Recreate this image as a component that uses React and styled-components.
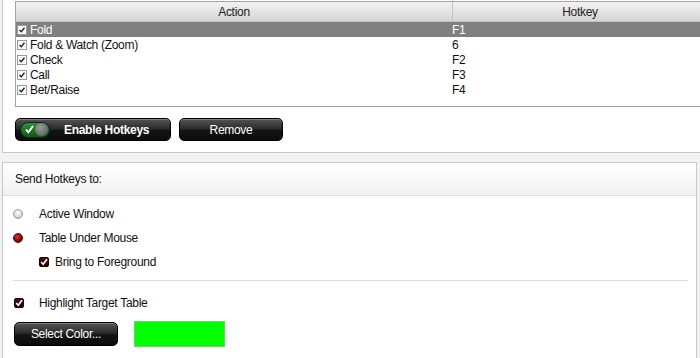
import React from "react"
import styled, { createGlobalStyle } from "styled-components"

const GlobalStyle = createGlobalStyle`
  html, body {
    margin: 0;
    background: #f3f3f3;
    font-family: "Liberation Sans", Arial, sans-serif;
    font-size: 12px;
    letter-spacing: -0.3px;
    color: #111;
  }
`

const Page = styled.div`
  width: 700px;
  height: 358px;
  overflow: hidden;
  display: flex;
  flex-direction: column;
`

const TopPanel = styled.section`
  margin-left: 2px;
  width: 693px;
  background: #fff;
  border: 1px solid #c8c8c8;
  border-top: none;
  padding: 1px 8px 11px 12px;
`

const Table = styled.div`
  height: 104px;
  border: 1px solid #a3a3a3;
  background: #fff;
  display: flex;
  flex-direction: column;
`

const HeaderRow = styled.div`
  display: grid;
  grid-template-columns: 436px 1fr;
  height: 19px;
  background: linear-gradient(#f2f2f2, #d6d6d6);
  border-bottom: 1px solid #c0c0c0;
`

const HeaderCell = styled.div`
  display: flex;
  align-items: center;
  justify-content: center;
  border-left: ${p => (p.$first ? "none" : "1px solid #c4c4c4")};
  color: #222;
`

const Row = styled.div`
  display: grid;
  grid-template-columns: 436px 1fr;
  height: 15px;
  align-items: center;
  background: ${p => (p.$selected ? "#808080" : "transparent")};
  color: ${p => (p.$selected ? "#fff" : "#111")};
`

const Cell = styled.div`
  display: flex;
  align-items: center;
  gap: 3px;
  padding-left: ${p => (p.$first ? "1px" : "0")};
  white-space: nowrap;
`

const TinyBox = styled.span`
  width: 8px;
  height: 8px;
  border: 1px solid #9a9a9a;
  background: #fafafa;
  display: inline-flex;
  align-items: center;
  justify-content: center;
`

const ButtonRow = styled.div`
  display: flex;
  gap: 8px;
  margin-top: 11px;
`

const DarkButton = styled.button`
  height: ${p => p.$h || 23}px;
  width: ${p => p.$w}px;
  border: 1px solid #000;
  border-radius: 5px;
  background: linear-gradient(#555 0%, #2c2c2c 45%, #141414 55%, #0c0c0c 100%);
  box-shadow: inset 0 1px 0 rgba(255, 255, 255, 0.25);
  color: #fff;
  font-family: "Liberation Sans", Arial, sans-serif;
  font-size: 12px;
  letter-spacing: -0.3px;
  font-weight: ${p => (p.$bold ? "bold" : "normal")};
  white-space: nowrap;
  display: flex;
  align-items: center;
  justify-content: ${p => (p.$lead ? "flex-start" : "center")};
  gap: 14px;
  padding: 0 4px;
  cursor: pointer;
`

const Toggle = styled.span`
  width: 30px;
  height: 16px;
  border-radius: 8px;
  background: linear-gradient(#2f8f3a, #0d5a17);
  border: 1px solid #0a2a0a;
  display: flex;
  align-items: center;
  justify-content: space-between;
  padding: 0 1px 0 4px;
  box-sizing: border-box;
`

const Knob = styled.span`
  width: 13px;
  height: 13px;
  border-radius: 50%;
  background: radial-gradient(circle at 40% 35%, #9a9a9a, #555);
`

const Gap = styled.div`
  height: 9px;
  background: #f3f3f3;
`

const LowerPanel = styled.section`
  margin-left: 2px;
  width: 693px;
  flex: 1;
  background: #fff;
  border: 1px solid #c8c8c8;
  border-bottom: none;
`

const LowerHeader = styled.div`
  height: 32px;
  display: flex;
  align-items: center;
  padding-left: 12px;
  background: linear-gradient(#ffffff, #f2f2f2);
  border-bottom: 1px solid #dedede;
`

const LowerBody = styled.div`
  padding: 6px 8px 0 10px;
  display: flex;
  flex-direction: column;
`

const OptionRow = styled.div`
  height: 24px;
  display: flex;
  align-items: center;
  padding-left: ${p => p.$indent || 0}px;
`

const Lead = styled.span`
  width: ${p => p.$w || 26}px;
  display: flex;
  align-items: center;
  padding-left: ${p => p.$nudge || 0}px;
  box-sizing: border-box;
`

const Radio = styled.span`
  width: 10px;
  height: 10px;
  border-radius: 50%;
  box-sizing: border-box;
  background: ${p =>
    p.$on
      ? "radial-gradient(circle at 40% 35%, #d23a3a, #8a0000 60%, #4a0000)"
      : "radial-gradient(circle at 50% 35%, #ffffff, #cfcfcf 70%, #9a9a9a)"};
  border: 1px solid ${p => (p.$on ? "#4a0000" : "#9a9a9a")};
`

const Divider = styled.div`
  height: 1px;
  background: #dcdcdc;
  margin: 6px 0 10px 0;
`

const ColorRow = styled.div`
  display: flex;
  align-items: center;
  gap: 16px;
  margin-top: 6px;
  padding-left: 1px;
`

const Swatch = styled.span`
  width: 89px;
  height: 24px;
  background: #00ff00;
  border: 1px solid #6cd36c;
`

const RowCheck = () => (
  <TinyBox>
    <svg width="6" height="6" viewBox="0 0 6 6">
      <path d="M0.5 3 L2.3 4.8 L5.5 0.8" fill="none" stroke="#222" strokeWidth="1.4" />
    </svg>
  </TinyBox>
)

const RedCheck = () => (
  <svg width="10" height="10" viewBox="0 0 10 10">
    <defs>
      <linearGradient id="rc" x1="0" y1="0" x2="0" y2="1">
        <stop offset="0" stopColor="#5a0c0c" />
        <stop offset="1" stopColor="#1a0000" />
      </linearGradient>
    </defs>
    <rect x="0.5" y="0.5" width="9" height="9" rx="1.5" fill="url(#rc)" stroke="#200" />
    <path d="M2.2 5 L4.2 7.2 L8 2.2" fill="none" stroke="#fff" strokeWidth="1.7" />
  </svg>
)

const actions = [
  ["Fold", "F1"],
  ["Fold & Watch (Zoom)", "6"],
  ["Check", "F2"],
  ["Call", "F3"],
  ["Bet/Raise", "F4"],
]

const App = () => (
  <Page>
    <GlobalStyle />
    <TopPanel>
      <Table>
        <HeaderRow>
          <HeaderCell $first>Action</HeaderCell>
          <HeaderCell>Hotkey</HeaderCell>
        </HeaderRow>
        {actions.map(([name, key], i) => (
          <Row key={name} $selected={i === 0}>
            <Cell $first>
              <RowCheck />
              {name}
            </Cell>
            <Cell>{key}</Cell>
          </Row>
        ))}
      </Table>
      <ButtonRow>
        <DarkButton $w={156} $bold $lead>
          <Toggle>
            <svg width="9" height="9" viewBox="0 0 9 9">
              <path d="M1 4.6 L3.4 7.4 L8 1" fill="none" stroke="#fff" strokeWidth="1.8" />
            </svg>
            <Knob />
          </Toggle>
          Enable Hotkeys
        </DarkButton>
        <DarkButton $w={104}>Remove</DarkButton>
      </ButtonRow>
    </TopPanel>
    <Gap />
    <LowerPanel>
      <LowerHeader>Send Hotkeys to:</LowerHeader>
      <LowerBody>
        <OptionRow>
          <Lead><Radio /></Lead>
          Active Window
        </OptionRow>
        <OptionRow>
          <Lead><Radio $on /></Lead>
          Table Under Mouse
        </OptionRow>
        <OptionRow $indent={26}>
          <Lead $w={16}><RedCheck /></Lead>
          Bring to Foreground
        </OptionRow>
        <Divider />
        <OptionRow>
          <Lead $nudge={1}><RedCheck /></Lead>
          Highlight Target Table
        </OptionRow>
        <ColorRow>
          <DarkButton $w={104} $h={24}>Select Color...</DarkButton>
          <Swatch />
        </ColorRow>
      </LowerBody>
    </LowerPanel>
  </Page>
)

export default App
